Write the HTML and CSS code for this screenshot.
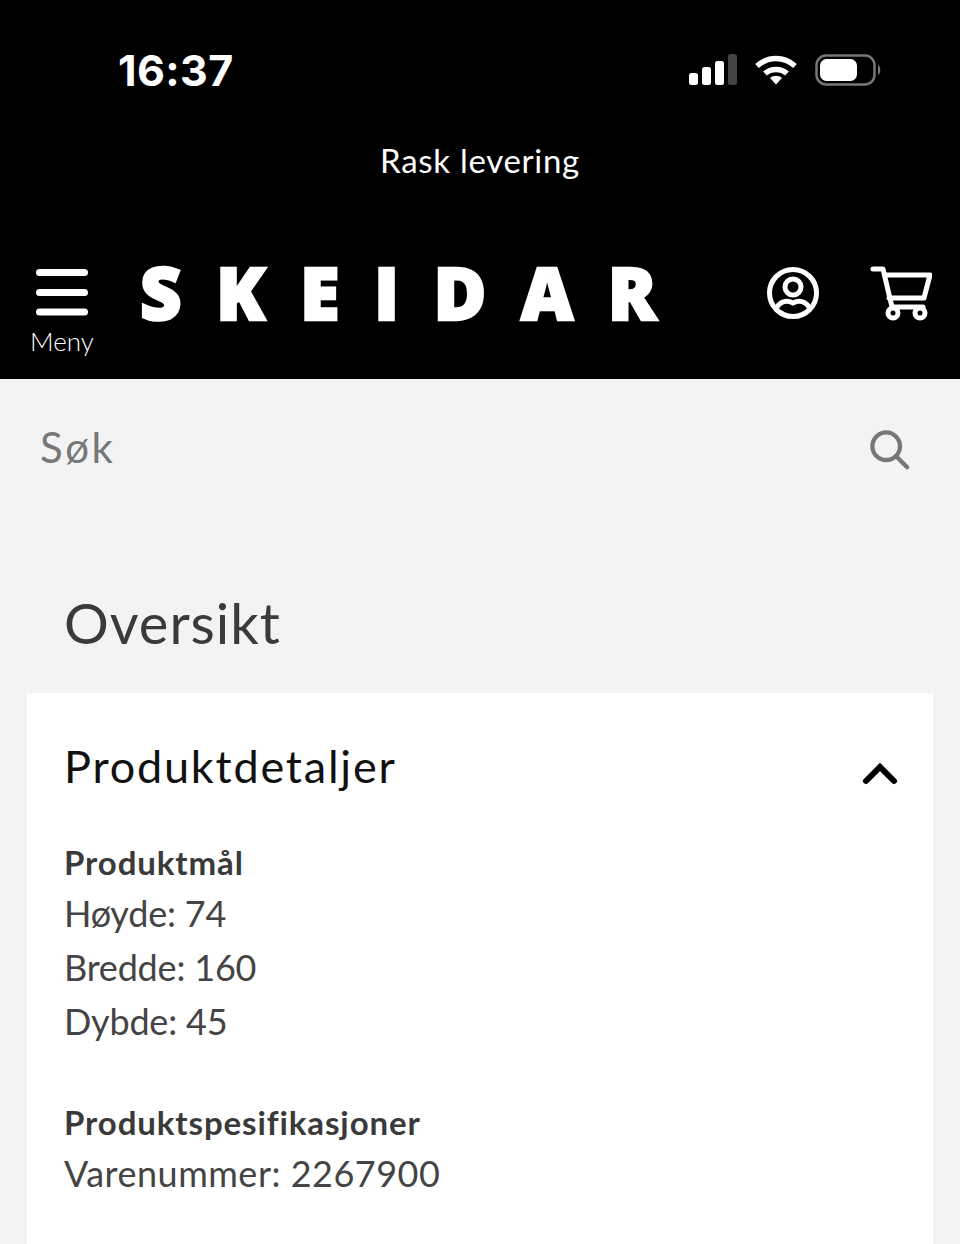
FILE: index.html
```html
<!DOCTYPE html>
<html lang="no">
<head>
<meta charset="utf-8">
<title>Skeidar</title>
<link rel="stylesheet" href="styles.css">
</head>
<body>
<header class="top">
  <div class="status">
    <span class="time">16:37</span>
    <div class="status-icons">
      <svg class="signal" width="48" height="32" viewBox="0 0 48 32"><rect x="0" y="19" width="9" height="12" rx="2.5" fill="#fff"/><rect x="13" y="13" width="9" height="18" rx="2.5" fill="#fff"/><rect x="26" y="7" width="9" height="24" rx="2.5" fill="#fff"/><rect x="39" y="0" width="9" height="31" rx="2.5" fill="#444"/></svg>
      <svg class="wifi" width="42" height="30" viewBox="0 0 42 30"><path d="M2 11 C13 1 29 1 40 11" fill="none" stroke="#fff" stroke-width="5.5" stroke-linejoin="round"/><path d="M10 18.5 C16 13 26 13 32 18.5" fill="none" stroke="#fff" stroke-width="5.5"/><path d="M15 23 C18.500 20 23.500 20 27 23 L21 29.500 Z" fill="#fff"/></svg>
      <svg class="battery" width="68" height="32" viewBox="0 0 68 32"><rect x="1.500" y="1.500" width="58" height="29" rx="9.500" fill="none" stroke="#777" stroke-width="2.500"/><rect x="5" y="5" width="37" height="22" rx="6.500" fill="#fff"/><path d="M63 11 C66 12 66 20 63 21 Z" fill="#777"/></svg>
    </div>
  </div>
  <p class="promo">Rask levering</p>
  <div class="brandbar">
    <button class="menu" type="button">
      <svg width="52" height="48" viewBox="0 0 52 48"><path d="M3.500 3.500H48.500M3.500 23.500H48.500M3.500 43H48.500" stroke="#fff" stroke-width="7" stroke-linecap="round"/></svg>
      <span>Meny</span>
    </button>
    <div class="logo">SKEIDAR</div>
    <div class="actions">
      <svg width="54" height="54" viewBox="0 0 54 54" fill="none" stroke="#fff" stroke-width="5"><circle cx="27" cy="27" r="23.500"/><circle cx="27" cy="21" r="8"/><path d="M11 41 C15 35 21 34 27 37 C33 34 39 35 43 41"/></svg>
      <svg width="62" height="56" viewBox="0 0 62 56" fill="none" stroke="#fff" stroke-width="5" stroke-linecap="round" stroke-linejoin="round"><path d="M3 3H13L22 41H53"/><path d="M15 9H60L54 32H19"/><circle cx="23" cy="47" r="5"/><circle cx="50" cy="47" r="5"/></svg>
    </div>
  </div>
</header>
<main class="page">
  <div class="search">
    <span>Søk</span>
    <svg class="search-icon" width="40" height="40" viewBox="0 0 42 42" fill="none" stroke="#777" stroke-width="4.500"><circle cx="17" cy="17" r="14.500"/><path d="M27.500 27.500L39 39" stroke-linecap="round"/></svg>
  </div>
  <h1 class="title">Oversikt</h1>
  <section class="card">
    <div class="card-head">
      <h2>Produktdetaljer</h2>
      <svg class="chevron" width="36" height="24" viewBox="0 0 36 24" fill="none" stroke="#000" stroke-width="6" stroke-linecap="round" stroke-linejoin="miter"><path d="M4 20L18 6L32 20"/></svg>
    </div>
    <h3>Produktmål</h3>
    <ul class="list">
      <li>Høyde: 74</li>
      <li>Bredde: 160</li>
      <li>Dybde: 45</li>
    </ul>
    <h3>Produktspesifikasjoner</h3>
    <ul class="list list-wide">
      <li>Varenummer: 2267900</li>
    </ul>
  </section>
</main>
</body>
</html>
```
FILE: styles.css
```css
* { box-sizing: border-box; }
html, body { margin: 0; padding: 0; }
body {
  width: 960px;
  height: 1244px;
  overflow: hidden;
  background: #f3f3f3;
  font-family: "Lato", "Noto Sans", sans-serif;
  color: #333;
}
.top {
  height: 379px;
  background: #000;
  color: #fff;
  display: flex;
  flex-direction: column;
}
.status {
  height: 140px;
  padding: 0 77px 0 118px;
  display: flex;
  justify-content: space-between;
  align-items: center;
}
.time {
  font-family: "Inter", sans-serif;
  font-weight: 700;
  font-size: 43px;
  letter-spacing: 0.4px;
}
.status-icons { display: flex; align-items: center; gap: 18px; }
.promo {
  margin: 0;
  height: 40px;
  text-align: center;
  font-size: 33px;
  font-weight: 400;
  line-height: 40px;
  letter-spacing: 0.700px;
}
.brandbar {
  margin-top: 89px;
  padding: 0 28px 0 30px;
  display: flex;
  align-items: flex-start;
}
.menu {
  width: 64px;
  padding: 0;
  border: 0;
  background: none;
  color: #fff;
  font: inherit;
  font-size: 26px;
  font-weight: 300;
  display: flex;
  flex-direction: column;
  align-items: center;
  gap: 8px;
}
.logo {
  margin: -26px 0 0 46px;
  font-family: "Open Sans", sans-serif;
  font-weight: 800;
  font-size: 72px;
  line-height: 98px;
  letter-spacing: 34.500px;
  white-space: nowrap;
  -webkit-text-stroke: 2.500px #fff;
}
.actions {
  margin: -3px 0 0 auto;
  display: flex;
  gap: 50px;
}
.page {
  height: 865px;
  display: flex;
  flex-direction: column;
  overflow: hidden;
}
.search {
  height: 210px;
  flex: none;
  padding: 0 50px 74px 40px;
  display: flex;
  align-items: center;
  justify-content: space-between;
  font-size: 42px;
  font-weight: 400;
  letter-spacing: 2.500px;
  color: #777;
}
.search-icon { margin-top: 6px; }
.title {
  flex: none;
  margin: 0 0 36px 64px;
  font-size: 56px;
  font-weight: 400;
  line-height: 68px;
  letter-spacing: 1px;
  color: #3a3a3a;
}
.card {
  flex: 1;
  margin: 0 27px;
  padding: 0 37px;
  background: #fff;
}
.card-head {
  height: 146px;
  display: flex;
  justify-content: space-between;
  align-items: center;
}
.chevron { margin: 14px -2px 0 0; }
.card-head h2 { margin: 0; font-size: 45px; font-weight: 400; letter-spacing: 1.800px; color: #111; }
h3 { margin: 0; font-size: 33px; font-weight: 700; line-height: 47px; letter-spacing: 0.900px; color: #3a3a3a; }
.list { list-style: none; margin: 0 0 51px; padding: 0; font-size: 36px; line-height: 54px; letter-spacing: -0.200px; color: #444; }
.list-wide { letter-spacing: 0.500px; }
```
